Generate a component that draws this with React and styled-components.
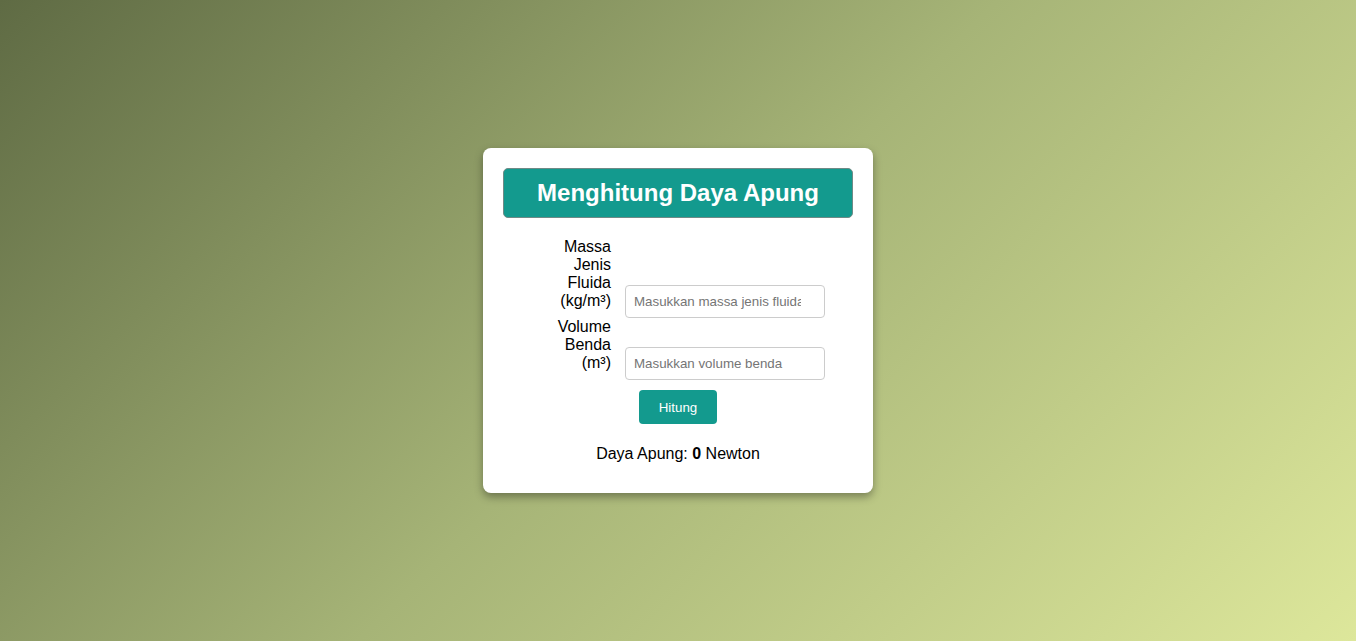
import React, { useState } from 'react';
import styled, { createGlobalStyle } from 'styled-components';

const GlobalStyle = createGlobalStyle`
  html, body {
    margin: 0;
    padding: 0;
  }
  body {
    font-family: "Liberation Sans", Arial, sans-serif;
    color: #000;
  }
`;

const Page = styled.div`
  display: flex;
  align-items: center;
  justify-content: center;
  height: 100vh;
  background: linear-gradient(135deg, #5f6b44 0%, #a6b477 50%, #dde79b 100%);
`;

const Card = styled.div`
  width: 350px;
  padding: 20px;
  background: #fff;
  border-radius: 8px;
  box-shadow: 0 4px 8px rgba(0, 0, 0, 0.35);
  text-align: center;
`;

const Header = styled.h1`
  margin: 0 0 20px;
  padding: 10px;
  background: #139a8e;
  border: 1px solid #6f8a86;
  border-radius: 5px;
  color: #fff;
  font-size: 24px;
  font-weight: bold;
`;

const Row = styled.div`
  text-align: center;
`;

const Label = styled.label`
  display: inline-block;
  width: 80px;
  margin-right: 14px;
  text-align: right;
  font-size: 16px;
`;

const Input = styled.input`
  width: 200px;
  box-sizing: border-box;
  padding: 8px;
  border: 1px solid #ccc;
  border-radius: 4px;
  font-family: "Liberation Sans", Arial, sans-serif;
  font-size: 13.333px;
  outline: none;

  &::placeholder {
    color: #757575;
  }
`;

const Button = styled.button`
  margin-top: 10px;
  width: 78px;
  height: 34px;
  border: none;
  border-radius: 4px;
  background: #139a8e;
  color: #fff;
  font-family: "Liberation Sans", Arial, sans-serif;
  font-size: 13.333px;
  cursor: pointer;
`;

const Result = styled.p`
  margin: 21px 0 10px;
  font-size: 16px;
`;

function App() {
  const [rho, setRho] = useState('');
  const [vol, setVol] = useState('');
  const [force, setForce] = useState(0);

  const hitung = () => {
    const f = parseFloat(rho) * 9.8 * parseFloat(vol);
    setForce(Number.isFinite(f) ? +f.toFixed(2) : 0);
  };

  return (
    <Page>
      <GlobalStyle />
      <Card>
        <Header>Menghitung Daya Apung</Header>
        <Row>
          <Label htmlFor="rho">Massa Jenis Fluida (kg/m³)</Label>
          <Input
            id="rho"
            type="number"
            placeholder="Masukkan massa jenis fluida"
            value={rho}
            onChange={e => setRho(e.target.value)}
          />
        </Row>
        <Row>
          <Label htmlFor="vol">Volume Benda (m³)</Label>
          <Input
            id="vol"
            type="number"
            placeholder="Masukkan volume benda"
            value={vol}
            onChange={e => setVol(e.target.value)}
          />
        </Row>
        <Button onClick={hitung}>Hitung</Button>
        <Result>
          Daya Apung: <b>{force}</b> Newton
        </Result>
      </Card>
    </Page>
  );
}

export default App;
